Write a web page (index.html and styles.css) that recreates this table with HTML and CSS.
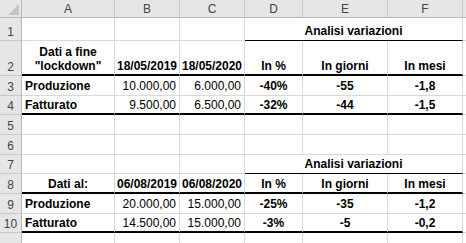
FILE: index.html
```html
<!DOCTYPE html>
<html>
<head>
<meta charset="utf-8">
<link rel="stylesheet" href="styles.css">
</head>
<body>
<div class="sheet">
  <div class="corner"><div class="tri"></div></div>
  <div class="ch">A</div><div class="ch">B</div><div class="ch">C</div><div class="ch">D</div><div class="ch">E</div><div class="ch">F</div><div class="ch last"></div>

  <div class="rh">1</div>
  <div class="c"></div><div class="c"></div><div class="c"></div>
  <div class="c merged b center thinb">Analisi variazioni</div><div class="c"></div>

  <div class="rh">2</div>
  <div class="c b center wrap thick">Dati a fine<br>"lockdown"</div>
  <div class="c b center thick">18/05/2019</div>
  <div class="c b center thick">18/05/2020</div>
  <div class="c b center thick">In %</div>
  <div class="c b center thick">In giorni</div>
  <div class="c b center thick">In mesi</div>
  <div class="c"></div>

  <div class="rh">3</div>
  <div class="c b">Produzione</div>
  <div class="c right">10.000,00</div>
  <div class="c right">6.000,00</div>
  <div class="c b center">-40%</div>
  <div class="c b center">-55</div>
  <div class="c b center">-1,8</div>
  <div class="c"></div>

  <div class="rh">4</div>
  <div class="c b thick">Fatturato</div>
  <div class="c right thick">9.500,00</div>
  <div class="c right thick">6.500,00</div>
  <div class="c b center thick">-32%</div>
  <div class="c b center thick">-44</div>
  <div class="c b center thick">-1,5</div>
  <div class="c"></div>

  <div class="rh">5</div>
  <div class="c"></div><div class="c"></div><div class="c"></div><div class="c"></div><div class="c"></div><div class="c"></div><div class="c"></div>

  <div class="rh">6</div>
  <div class="c"></div><div class="c"></div><div class="c"></div><div class="c"></div><div class="c"></div><div class="c"></div><div class="c"></div>

  <div class="rh">7</div>
  <div class="c"></div><div class="c"></div><div class="c"></div>
  <div class="c merged b center thinb">Analisi variazioni</div><div class="c"></div>

  <div class="rh">8</div>
  <div class="c b center thick">Dati al:</div>
  <div class="c b center thick">06/08/2019</div>
  <div class="c b center thick">06/08/2020</div>
  <div class="c b center thick">In %</div>
  <div class="c b center thick">In giorni</div>
  <div class="c b center thick">In mesi</div>
  <div class="c"></div>

  <div class="rh">9</div>
  <div class="c b">Produzione</div>
  <div class="c right">20.000,00</div>
  <div class="c right">15.000,00</div>
  <div class="c b center">-25%</div>
  <div class="c b center">-35</div>
  <div class="c b center">-1,2</div>
  <div class="c"></div>

  <div class="rh">10</div>
  <div class="c b thick">Fatturato</div>
  <div class="c right thick">14.500,00</div>
  <div class="c right thick">15.000,00</div>
  <div class="c b center thick">-3%</div>
  <div class="c b center thick">-5</div>
  <div class="c b center thick">-0,2</div>
  <div class="c"></div>

  <div class="rh"></div>
  <div class="c"></div><div class="c"></div><div class="c"></div><div class="c"></div><div class="c"></div><div class="c"></div><div class="c"></div>
</div>
</body>
</html>
```

FILE: styles.css
```css
html, body {
  margin: 0;
  padding: 0;
  background: #ffffff;
  overflow: hidden;
}
.sheet {
  display: grid;
  grid-template-columns: 22px 93px 65px 65px 58px 85px 75px 10px;
  grid-template-rows: 18px 23px 35px 20px 19px 20px 20px 19px 20px 20px 19px 20px;
  font-family: "Liberation Sans", Arial, sans-serif;
  font-size: 12px;
  color: #000;
  width: 466px;
}
.corner {
  background: #e6e6e6;
  border-right: 1px solid #b8b8b8;
  border-bottom: 1px solid #b8b8b8;
  box-sizing: border-box;
  position: relative;
}
.tri {
  position: absolute;
  right: 2px;
  bottom: 2px;
  width: 0;
  height: 0;
  border-left: 11px solid transparent;
  border-bottom: 11px solid #c4c4c4;
}
.ch {
  background: #e6e6e6;
  border-right: 1px solid #c8c8c8;
  border-bottom: 1px solid #b8b8b8;
  box-sizing: border-box;
  color: #444;
  display: flex;
  align-items: center;
  justify-content: center;
  font-size: 12px;
}
.ch.last { border-right: none; }
.rh {
  background: #e6e6e6;
  border-right: 1px solid #b8b8b8;
  border-bottom: 1px solid #c8c8c8;
  box-sizing: border-box;
  color: #444;
  display: flex;
  align-items: flex-end;
  justify-content: center;
  padding-bottom: 1px;
  font-size: 12px;
}
.c {
  border-right: 1px solid #d9d9d9;
  border-bottom: 1px solid #d9d9d9;
  box-sizing: border-box;
  display: flex;
  align-items: flex-end;
  padding: 0 3px 2px 3px;
  white-space: nowrap;
  line-height: 14px;
}
.b { font-weight: bold; }
.center { justify-content: center; text-align: center; }
.right { justify-content: flex-end; }
.wrap { white-space: normal; }
.merged { grid-column: span 3; }
.thick { border-bottom: 2px solid #000; padding-bottom: 1px; }
.thinb { border-bottom: 1px solid #000; }
```
